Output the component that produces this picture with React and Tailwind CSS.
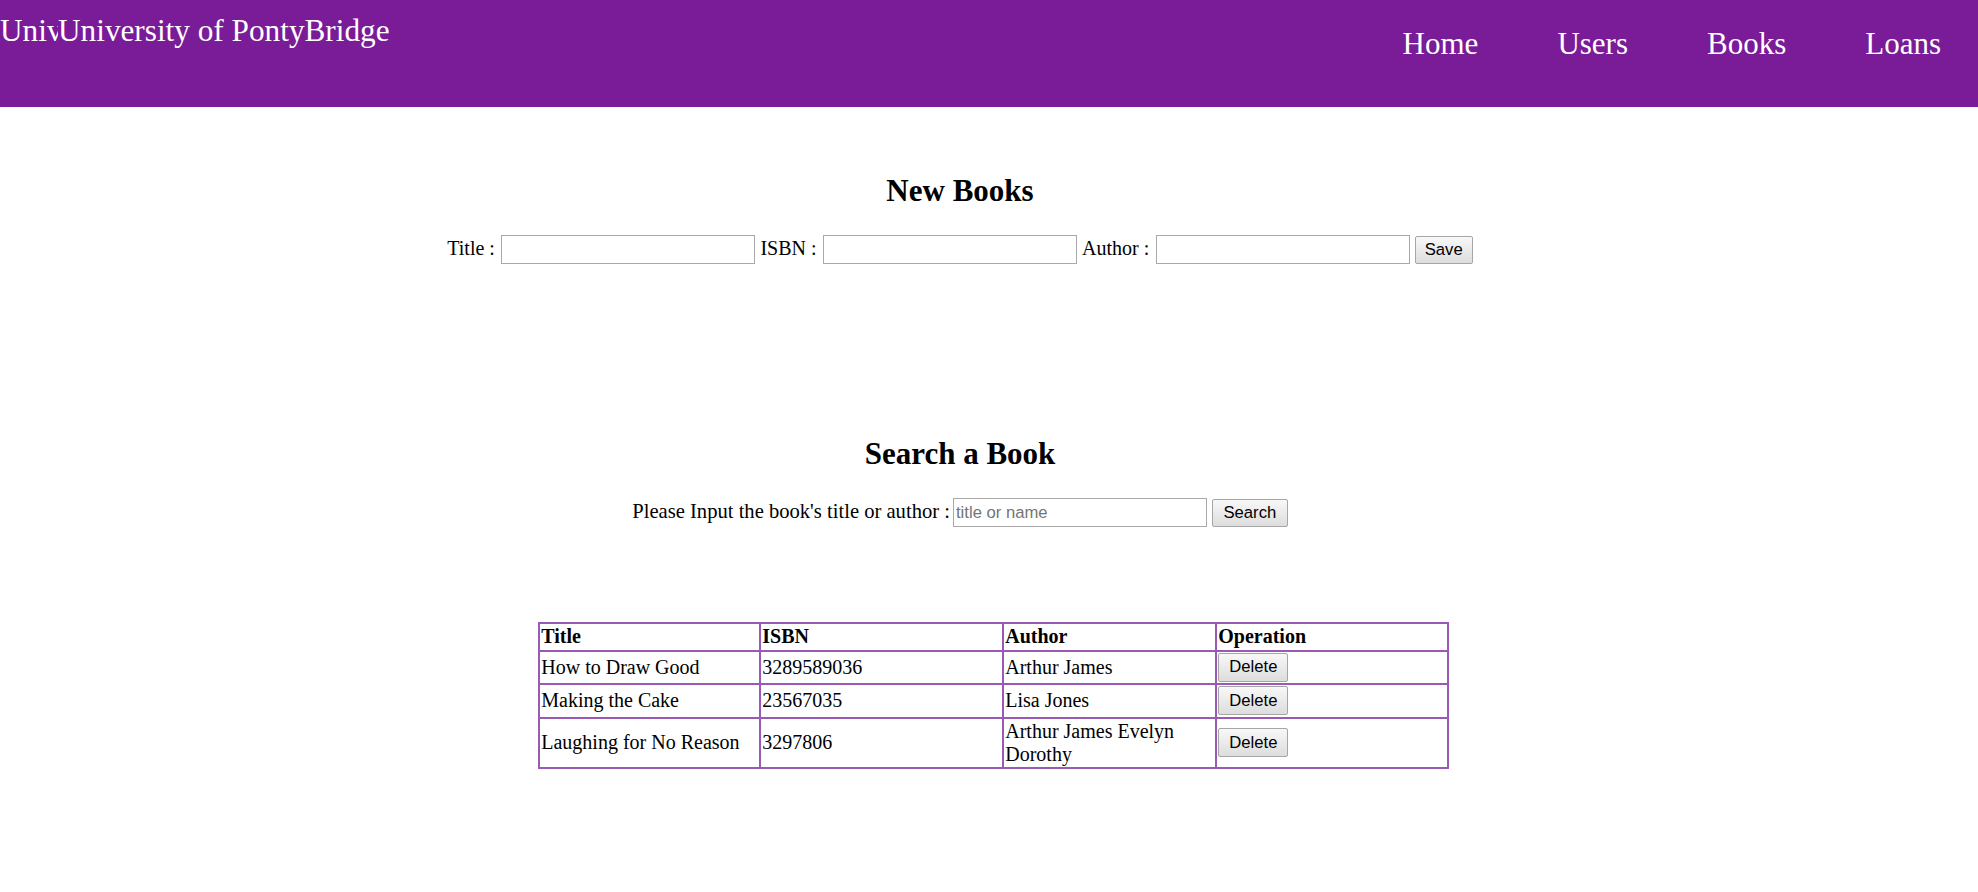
const books = [
  { title: 'How to Draw Good', isbn: '3289589036', author: 'Arthur James' },
  { title: 'Making the Cake', isbn: '23567035', author: 'Lisa Jones' },
  { title: 'Laughing for No Reason', isbn: '3297806', author: 'Arthur James Evelyn Dorothy' },
];

const inputCls =
  "h-[29px] w-[254px] border border-[#a9a9a9] bg-white px-[2px] font-['Liberation_Sans',Arial,sans-serif] text-[16.67px] text-black outline-none placeholder:text-[#757575]";

const buttonCls =
  "h-[28px] rounded-[2px] border border-[#a6a6a6] bg-gradient-to-b from-[#f8f8f8] to-[#dddddd] px-[9px] font-['Liberation_Sans',Arial,sans-serif] text-[16.67px] leading-[20px] text-black";

function Header() {
  return (
    <header className="flex h-[107px] items-start justify-between bg-[#7a1b98] leading-[36px] text-white">
      <div className="flex pt-[13px] text-[31.25px]">
        <span className="inline-block w-[58px] overflow-hidden whitespace-nowrap">University logo</span>
        <span className="whitespace-nowrap">University of PontyBridge</span>
      </div>
      <nav className="flex gap-[79px] pr-[37px] pt-[26px] text-[31px]">
        <a href="#">Home</a>
        <a href="#">Users</a>
        <a href="#">Books</a>
        <a href="#">Loans</a>
      </nav>
    </header>
  );
}

function Label({ children }) {
  return <span className="pb-[2px] pr-[1.5px] leading-[23px] whitespace-nowrap">{children}</span>;
}

function NewBookForm() {
  return (
    <section>
      <h2 className="mt-[66px] text-center text-[31px] font-bold leading-[36px]">New Books</h2>
      <div className="mt-[26px] flex items-center justify-center gap-[5px]">
        <Label>Title :</Label>
        <input type="text" className={inputCls} />
        <Label>ISBN :</Label>
        <input type="text" className={inputCls} />
        <Label>Author :</Label>
        <input type="text" className={inputCls} />
        <button type="button" className={buttonCls}>Save</button>
      </div>
    </section>
  );
}

function SearchBook() {
  return (
    <section>
      <h2 className="mt-[172px] text-center text-[31px] font-bold leading-[36px]">Search a Book</h2>
      <div className="mt-[26px] flex items-center justify-center">
        <span className="mr-[3px] pb-[2px] text-[20.6px] leading-[23px] whitespace-nowrap">Please Input the book's title or author :</span>
        <input type="text" placeholder="title or name" className={inputCls} />
        <button type="button" className={`${buttonCls} ml-[5px] px-[10.5px]`}>Search</button>
      </div>
    </section>
  );
}

function BookTable() {
  const cell = 'border-2 border-[#9b59b6] p-[1.25px] text-left align-middle';
  return (
    <table className="ml-[538px] mt-[95px] w-[909px] table-fixed border-collapse leading-[23px]">
      <colgroup>
        <col className="w-[221px]" />
        <col className="w-[243px]" />
        <col className="w-[213px]" />
        <col className="w-[232px]" />
      </colgroup>
      <thead>
        <tr>
          <th className={`${cell} font-bold`}>Title</th>
          <th className={`${cell} font-bold`}>ISBN</th>
          <th className={`${cell} font-bold`}>Author</th>
          <th className={`${cell} font-bold`}>Operation</th>
        </tr>
      </thead>
      <tbody>
        {books.map((b) => (
          <tr key={b.isbn}>
            <td className={cell}>{b.title}</td>
            <td className={cell}>{b.isbn}</td>
            <td className={cell}>{b.author}</td>
            <td className={cell}>
              <button type="button" className={`${buttonCls} h-[29px] px-[10px]`}>Delete</button>
            </td>
          </tr>
        ))}
      </tbody>
    </table>
  );
}

export default function App() {
  return (
    <div className="min-h-[892px] bg-white font-['Liberation_Serif','Times_New_Roman',serif] text-[20px] text-black">
      <Header />
      <main className="w-[1920px] pb-[100px]">
        <NewBookForm />
        <SearchBook />
        <BookTable />
      </main>
    </div>
  );
}
